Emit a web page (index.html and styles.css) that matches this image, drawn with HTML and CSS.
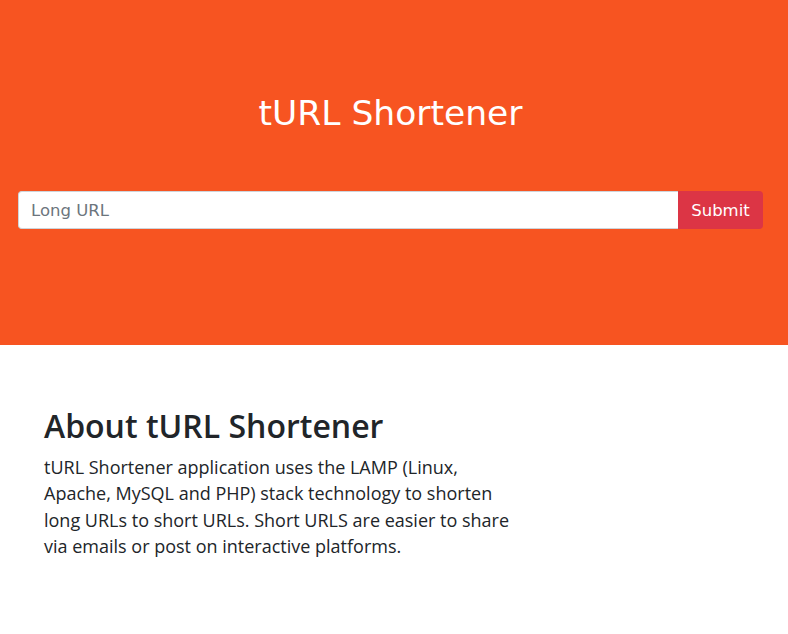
FILE: index.html
```html
<!DOCTYPE html>
<html lang="en">
<head>
<meta charset="utf-8">
<title>tURL Shortener</title>
<link rel="stylesheet" href="styles.css">
</head>
<body>
<header class="hero">
  <h1 class="hero-title">tURL Shortener</h1>
  <form class="url-form">
    <input class="url-input" type="text" placeholder="Long URL">
    <button class="url-submit" type="button">Submit</button>
  </form>
</header>
<section class="about">
  <h2 class="about-title">About tURL Shortener</h2>
  <p class="about-text">tURL Shortener application uses the LAMP (Linux, Apache, MySQL and PHP) stack technology to shorten long URLs to short URLs. Short URLS are easier to share via emails or post on interactive platforms.</p>
</section>
</body>
</html>
```
FILE: styles.css
```css
* { box-sizing: border-box; }
html, body { margin: 0; padding: 0; background: #fff; }
body { font-family: "Open Sans", "Noto Sans", sans-serif; color: #212529; }

.hero {
  background: #f75421;
  height: 345px;
  padding: 90px 25px 0 18px;
  display: flex;
  flex-direction: column;
}
.hero-title {
  margin: 0;
  text-align: center;
  color: #fff;
  font-family: "DejaVu Sans", sans-serif;
  font-weight: 400;
  font-size: 34.5px;
  line-height: 46px;
}
.url-form {
  display: flex;
  margin-top: 55px;
  height: 38px;
}
.url-input {
  flex: 1;
  height: 38px;
  border: 1px solid #ced4da;
  border-right: none;
  border-radius: 4px 0 0 4px;
  padding: 0 12px;
  font-family: "DejaVu Sans", sans-serif;
  font-size: 16.5px;
  color: #495057;
  background: #fff;
  outline: none;
}
.url-input::placeholder { color: #6c757d; }
.url-submit {
  width: 85px;
  height: 38px;
  border: none;
  border-radius: 0 4px 4px 0;
  background: #dc3545;
  color: #fff;
  font-family: "DejaVu Sans", sans-serif;
  font-size: 16.5px;
  padding: 0;
}

.about {
  padding: 62px 44px 0 44px;
}
.about-title {
  margin: 0 0 9px 0;
  font-size: 32px;
  font-weight: 600;
  line-height: 38px;
  color: #212529;
}
.about-text {
  margin: 0;
  width: 478px;
  font-size: 18px;
  line-height: 26.3px;
  color: #212529;
}
```
